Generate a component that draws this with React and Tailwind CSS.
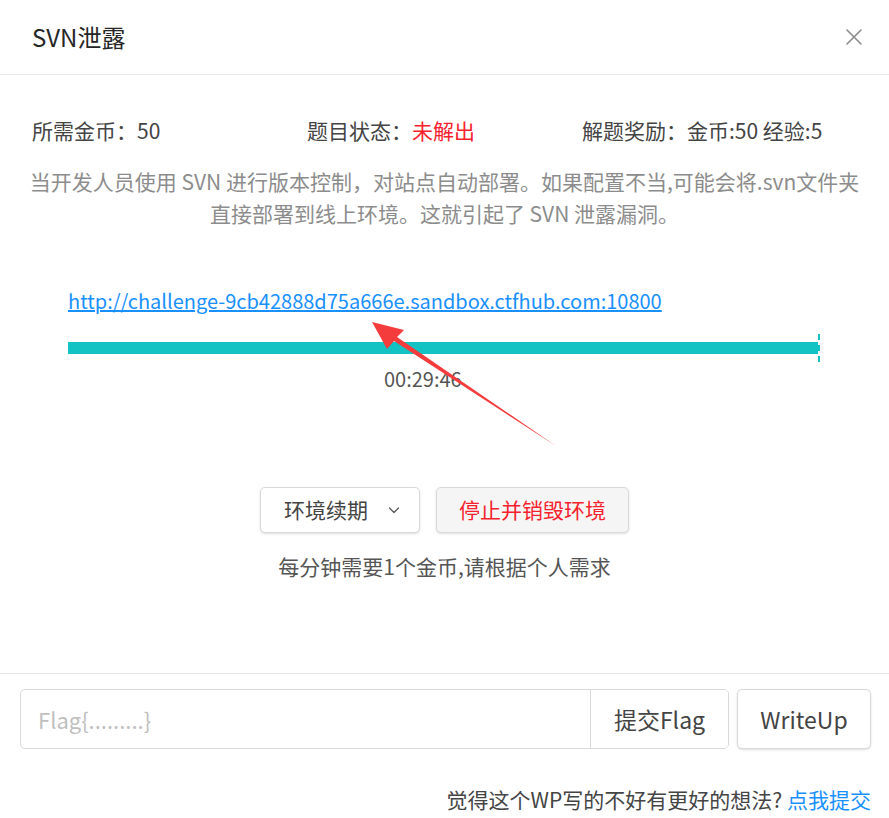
import React from 'react';

const font = { fontFamily: '"Noto Sans CJK SC", "Noto Sans", sans-serif' };

const CloseIcon = () => (
  <svg width="18" height="18" viewBox="0 0 18 18" fill="none" stroke="#8c8c8c" strokeWidth="1.6" strokeLinecap="round">
    <path d="M2 2L16 16M16 2L2 16" />
  </svg>
);

const ChevronDown = () => (
  <svg width="12" height="12" viewBox="0 0 12 12" fill="none" stroke="#595959" strokeWidth="1.3" strokeLinecap="round" strokeLinejoin="round">
    <path d="M1.5 4L6 8.5L10.5 4" />
  </svg>
);

export default function App() {
  return (
    <div className="relative w-[889px] h-[818px] bg-white overflow-hidden text-[#333]" style={font}>
      {/* header */}
      <div className="h-[75px] flex items-center justify-between pl-8 pr-[26px] border-b border-[#e8e8e8]">
        <span className="text-[24px] leading-[30px] text-[#262626]">SVN泄露</span>
        <CloseIcon />
      </div>

      {/* info */}
      <div className="grid grid-cols-3 px-8 pt-[40px] text-[21px] leading-[30px] text-[#444]">
        <div>所需金币：50</div>
        <div>题目状态：<span className="text-[#f5222d]">未解出</span></div>
        <div>解题奖励：金币:50 经验:5</div>
      </div>
      <p className="mt-[20px] px-6 text-center text-[21px] leading-[32px] text-[#8c8c8c] whitespace-nowrap">
        当开发人员使用 SVN 进行版本控制，对站点自动部署。如果配置不当,可能会将.svn文件夹
        <br />
        直接部署到线上环境。这就引起了 SVN 泄露漏洞。
      </p>

      {/* link + progress */}
      <div className="pl-[68px] pr-[66px] pt-[57px]">
        <a href="#" className="block text-[20px] leading-[30px] text-[#1890ff] underline">
          http://challenge-9cb42888d75a666e.sandbox.ctfhub.com:10800
        </a>
        <div className="mt-[26px] relative h-[12px] bg-[#f5f5f5]">
          <div className="h-full w-[750px] bg-[#13c2c2]" />
          <div className="absolute left-[750px] -top-[8px] w-[2px] h-[28px] border-l-2 border-dashed border-[#13c2c2]" />
        </div>
        <div className="mt-[11px] pl-[316px] text-[20px] leading-[28px] text-[#555]">00:29:46</div>
      </div>

      {/* buttons */}
      <div className="mt-[94px] flex justify-center gap-4">
        <button className="h-[46px] w-[160px] flex items-center justify-center gap-[20px] pl-[4px] border border-[#d9d9d9] rounded-[5px] bg-white text-[21px] text-[#444] shadow-sm">
          环境续期 <ChevronDown />
        </button>
        <button className="h-[46px] w-[193px] border border-[#d9d9d9] rounded-[5px] bg-[#f5f5f5] text-[21px] text-[#f5222d] shadow-sm">
          停止并销毁环境
        </button>
      </div>
      <div className="mt-[18px] text-center text-[21px] leading-[30px] text-[#555]">每分钟需要1个金币,请根据个人需求</div>

      {/* bottom */}
      <div className="mt-[92px] border-t border-[#e8e8e8] pl-[20px] pr-[18px] pt-[15px]">
        <div className="flex gap-2 h-[60px]">
          <div className="flex flex-1 border border-[#d9d9d9] rounded-[5px] overflow-hidden">
            <input
              placeholder="Flag{.........}"
              className="flex-1 min-w-0 px-[17px] text-[22px] placeholder-[#bfbfbf] outline-none"
            />
            <button className="w-[138px] border-l border-[#d9d9d9] text-[23px] text-[#444] bg-white">提交Flag</button>
          </div>
          <button className="w-[134px] border border-[#d9d9d9] rounded-[5px] text-[23px] text-[#444] bg-white shadow-sm">WriteUp</button>
        </div>
        <div className="mt-[35px] text-right text-[21px] leading-[30px] text-[#444]">
          觉得这个WP写的不好有更好的想法? <a href="#" className="text-[#1890ff]">点我提交</a>
        </div>
      </div>

      {/* annotation arrow */}
      <svg className="absolute left-0 top-0 pointer-events-none" width="889" height="818">
        <polygon points="372,322 404,330 397,337 556,446 394,341 387,349" fill="#f43c3c" />
      </svg>
    </div>
  );
}
